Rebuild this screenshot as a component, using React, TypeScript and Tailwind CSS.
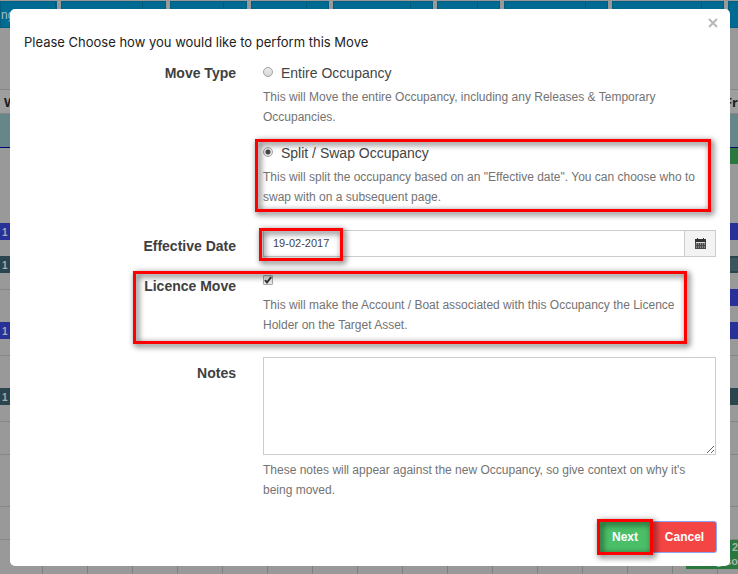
import React from "react";
import type { ReactNode } from "react";

type Band = { box: string; text?: string };

const toolbar = [
  { width: "w-[57px]", tail: "w-0", text: "ng" },
  { width: "w-[105px]", tail: "w-[23px]" },
  { width: "w-[77px]", tail: "w-[23px]" },
  { width: "w-[78px]", tail: "w-[22px]" },
  { width: "w-[100px]", tail: "w-[22px]" },
  { width: "w-[63px]", tail: "w-[22px]" },
  { width: "w-[104px]", tail: "w-[22px]" },
  { width: "w-[112px]", tail: "w-[22px]" },
  { width: "w-[105px]", tail: "w-[22px]" },
];

const rowLine = "border-t border-[#868686]";

const leftBands: Band[] = [
  { box: "h-[75px]" },
  { box: "h-[17px] bg-[#28309a]", text: "1 J" },
  { box: "h-4" },
  { box: "h-[17px] bg-[#2b454f]", text: "1 S" },
  { box: "h-4" },
  { box: `h-[33px] ${rowLine}` },
  { box: "h-[17px] bg-[#28309a]", text: "1 J" },
  { box: "h-4" },
  { box: `h-[33px] ${rowLine}` },
  { box: "h-[17px] bg-[#2b454f]", text: "1 A" },
  { box: "h-4" },
  { box: `h-[33px] ${rowLine}` },
  { box: `h-[52px] ${rowLine}` },
  { box: `h-[33px] ${rowLine}` },
];

const rightBands: Band[] = [
  { box: "h-4 bg-[#2b783f]" },
  { box: "h-[59px]" },
  { box: "h-[17px] bg-[#28309a]" },
  { box: "h-4" },
  { box: "h-[17px] border-y-2 border-[#2b454f] bg-[#3b555f]" },
  { box: "h-4" },
  { box: "h-[17px] bg-[#28309a]" },
  { box: "h-4" },
  { box: "h-[17px] bg-[#28309a]" },
  { box: "h-4" },
  { box: `h-[33px] ${rowLine}` },
  { box: "h-[17px] bg-[#2b454f]" },
  { box: "h-4" },
  { box: `h-[33px] ${rowLine}` },
  { box: `h-[52px] ${rowLine}` },
  { box: `h-[33px] ${rowLine}` },
];

function Bands({ bands, className }: { bands: Band[]; className: string }) {
  return (
    <div className={className}>
      {bands.map((band, i) => (
        <div
          key={i}
          className={`${band.box} overflow-hidden pl-[2px] text-[10px] leading-[20px] font-bold text-[#a8a8a8]`}
        >
          {band.text}
        </div>
      ))}
    </div>
  );
}

function Calendar() {
  return (
    <div
      aria-hidden="true"
      className="absolute inset-0 flex flex-col overflow-hidden bg-[#999]"
    >
      <div className="flex gap-1 pt-px">
        {toolbar.map((item, i) => (
          <div
            key={i}
            className={`${item.width} flex h-[27px] shrink-0 justify-between border border-[#005f80] bg-[#006a92] text-[12px] leading-[26px] text-[#a8bcc4]`}
          >
            <span>{item.text}</span>
            <span className={`${item.tail} border-l border-[#005a7a]`} />
          </div>
        ))}
      </div>
      <div className="mt-[61px] flex h-[25px] justify-between border-y border-[#868686] bg-[#9e9e9e] pl-1 font-['Open_Sans',sans-serif] text-[13px] leading-[25px] font-bold text-[#1c1c1c]">
        <span>W</span>
        <span>Fr</span>
      </div>
      <div className="h-[34px] border-b border-[#00007a] bg-[#67868a]" />
      <div className="flex">
        <Bands bands={leftBands} className="flex-1" />
        <Bands bands={rightBands} className="w-[52px]" />
      </div>
      <div className="relative flex flex-1 border-t border-[#868686]">
        <div className="w-[43px] shrink-0 border-r border-[#808080]" />
        {Array.from({ length: 15 }, (_, i) => (
          <div key={i} className="w-[45px] shrink-0 border-r border-[#808080]" />
        ))}
        <div className="absolute top-0 right-0 h-[29px] w-[52px] overflow-hidden bg-[#2b783f] text-right text-[11px] leading-[14px] font-bold text-[#a3b5a7]">
          <div>- 2</div>
          <div>g so</div>
        </div>
      </div>
    </div>
  );
}

function Highlight({ className }: { className: string }) {
  return (
    <span
      className={`pointer-events-none absolute border-[3px] border-[#f00] drop-shadow-[2px_2px_3px_rgba(0,0,0,0.8)] ${className}`}
    />
  );
}

function Row({
  label,
  htmlFor,
  className = "",
  children,
}: {
  label: string;
  htmlFor?: string;
  className?: string;
  children: ReactNode;
}) {
  const style =
    "w-[212px] shrink-0 pt-[6px] text-right text-[14px] leading-5 font-bold text-[#404040]";
  return (
    <div className={`relative flex gap-[27px] ${className}`}>
      {htmlFor ? (
        <label htmlFor={htmlFor} className={style}>
          {label}
        </label>
      ) : (
        <span className={style}>{label}</span>
      )}
      <div className="min-w-0 flex-1">{children}</div>
    </div>
  );
}

function Help({ children }: { children: ReactNode }) {
  return <p className="pr-4 text-[12px] leading-5 text-[#737373]">{children}</p>;
}

function MoveOption({ id, label, checked }: { id: string; label: string; checked?: boolean }) {
  return (
    <div className="mb-1 flex gap-2">
      <input
        type="radio"
        id={id}
        name="move-type"
        defaultChecked={checked}
        className="mt-1 size-[10px] shrink-0 appearance-none rounded-full border border-[#a0a0a0] bg-linear-to-b from-[#ececec] to-[#d8d8d8] checked:bg-[radial-gradient(circle,#444_0,#444_2px,#e6e6e6_3px)]"
      />
      <label htmlFor={id} className="text-[14px] leading-5 text-[#444]">
        {label}
      </label>
    </div>
  );
}

export default function App() {
  return (
    <div className="relative min-h-screen pt-[9px] pr-2 pb-2 pl-[10px] font-['Liberation_Sans',Arial,sans-serif]">
      <Calendar />
      <div
        role="dialog"
        aria-labelledby="move-title"
        className="relative rounded-[5px] bg-white px-[14px] pb-[14px]"
      >
        <button
          type="button"
          aria-label="Close"
          className="absolute top-[8px] right-[11px] p-px"
        >
          <svg viewBox="0 0 10 10" className="size-[10px]" stroke="#b8b8b8" strokeWidth="2">
            <path d="M1 1l8 8M9 1l-8 8" />
          </svg>
        </button>
        <h1
          id="move-title"
          className="pt-[23px] font-['Inter',sans-serif] text-[13px] leading-5 text-[#222]"
        >
          Please Choose how you would like to perform this Move
        </h1>

        <form onSubmit={(e) => e.preventDefault()} className="pt-[5px]">
          <Row label="Move Type">
            <div className="pt-[6px]">
              <MoveOption id="entire" label="Entire Occupancy" />
              <Help>
                This will Move the entire Occupancy, including any Releases &amp; Temporary
                Occupancies.
              </Help>
            </div>
            <div className="relative mt-4">
              <MoveOption id="split" label="Split / Swap Occupancy" checked />
              <Help>
                This will split the occupancy based on an "Effective date". You can choose who to
                swap with on a subsequent page.
              </Help>
              <Highlight className="-top-1 right-[5px] -bottom-[5px] -left-2" />
            </div>
          </Row>

          <Row label="Effective Date" htmlFor="date" className="mt-[23px]">
            <div className="relative flex h-[27px]">
              <input
                id="date"
                type="text"
                defaultValue="19-02-2017"
                className="min-w-0 flex-1 border border-[#ccc] px-[9px] text-[11px] text-[#444] outline-none"
              />
              <button
                type="button"
                aria-label="Open calendar"
                className="flex w-[31px] items-center justify-center border border-l-0 border-[#ccc] bg-[#f3f3f3]"
              >
                <svg viewBox="0 0 11 11" className="size-[11px]" shapeRendering="crispEdges">
                  <path fill="#333" d="M2 0h1v1h5V0h1v1h2v3H0V1h2z" />
                  <path fill="#888" d="M0 4h11v7H0z" />
                  <path
                    stroke="#4a4a4a"
                    d="M.5 4v7M2.5 4v7M4.5 4v7M6.5 4v7M8.5 4v7M10.5 4v7M0 10.5h11M0 7.5h11"
                  />
                  <path stroke="#ddd" d="M1 4.5h9" />
                </svg>
              </button>
              <Highlight className="-top-[2px] -left-1 h-[33px] w-[84px]" />
            </div>
          </Row>

          <Row label="Licence Move" htmlFor="licence" className="mt-[13px]">
            <div className="relative flex h-[25px] pt-[5px]">
              <input
                id="licence"
                type="checkbox"
                defaultChecked
                className="peer size-[10px] appearance-none rounded-[1px] border border-[#a8a8a8] bg-[#e8e8e8]"
              />
              <svg
                viewBox="0 0 10 10"
                fill="none"
                stroke="#333"
                strokeWidth="2"
                className="pointer-events-none absolute top-[5px] left-0 hidden size-[10px] peer-checked:block"
              >
                <path d="M2 5.2l2 2.2L8.2 2" />
              </svg>
            </div>
            <Help>
              This will make the Account / Boat associated with this Occupancy the Licence Holder
              on the Target Asset.
            </Help>
            <Highlight className="top-px right-[29px] -bottom-[9px] left-[109px]" />
          </Row>

          <Row label="Notes" htmlFor="notes" className="mt-[22px]">
            <textarea
              id="notes"
              className="mb-[5px] block h-[98px] w-full border border-[#ccc] p-2 text-[12px] text-[#444] outline-none"
            />
            <Help>
              These notes will appear against the new Occupancy, so give context on why it's being
              moved.
            </Help>
          </Row>

          <div className="mt-[22px] flex justify-end gap-[3px] text-[12px] leading-[30px] font-bold text-white">
            <div className="relative">
              <button type="submit" className="h-[30px] w-[50px] bg-[#4abf68]">
                Next
              </button>
              <Highlight className="-inset-[3px]" />
            </div>
            <button
              type="button"
              className="h-[30px] w-[63px] rounded-r-[2px] bg-[#f44545] ring-1 ring-[#8aa6f0]"
            >
              Cancel
            </button>
          </div>
        </form>
      </div>
    </div>
  );
}
